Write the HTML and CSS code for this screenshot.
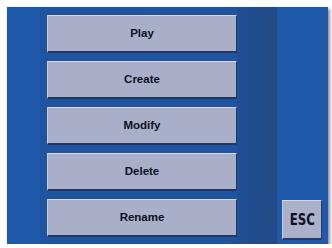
FILE: index.html
```html
<!DOCTYPE html>
<html>
<head>
<meta charset="utf-8">
<link rel="stylesheet" href="styles.css">
</head>
<body>
<div class="frame">
  <div class="left"></div>
  <div class="panel">
    <div class="menu">
      <div class="btn">Play</div>
      <div class="btn">Create</div>
      <div class="btn">Modify</div>
      <div class="btn">Delete</div>
      <div class="btn">Rename</div>
    </div>
    <div class="strip"></div>
  </div>
  <div class="side">
    <div class="esc"><span class="esc-label">ESC</span></div>
  </div>
</div>
</body>
</html>
```
FILE: styles.css
```css
html, body {
  margin: 0;
  padding: 0;
  background: #ffffff;
}
.frame {
  margin: 7px 0 0 7px;
  width: 321px;
  height: 237px;
  background: #1f5aaa;
  display: flex;
  box-shadow: 2px 2px 3px rgba(90, 90, 110, 0.7);
}
.left {
  width: 33px;
  flex: none;
}
.panel {
  width: 237px;
  flex: none;
  display: flex;
  background: #1e55a2;
}
.menu {
  display: flex;
  flex-direction: column;
  gap: 8px;
  padding: 8px 0 0 7px;
  width: 190px;
}
.btn {
  height: 38px;
  box-sizing: border-box;
  background: #a9afc9;
  border-top: 1px solid #d4d8ea;
  border-left: 1px solid #c8cce0;
  border-bottom: 2px solid #2b3452;
  border-right: 1px solid #2b3452;
  display: flex;
  align-items: center;
  justify-content: center;
  padding-bottom: 1px;
  font-family: "Liberation Sans", Arial, sans-serif;
  font-weight: bold;
  font-size: 11.5px;
  color: #0c1222;
}
.strip {
  flex: 1;
  background: linear-gradient(to right, #1f4f96, #244a86);
}
.side {
  flex: 1;
  display: flex;
  align-items: flex-end;
  justify-content: flex-end;
  padding: 0 6px 4px 0;
}
.esc {
  width: 40px;
  height: 40px;
  box-sizing: border-box;
  background: #abb1cb;
  border-top: 1px solid #d4d8ea;
  border-left: 1px solid #c8cce0;
  border-bottom: 2px solid #2b3a66;
  border-right: 1px solid #2b3a66;
  display: flex;
  align-items: center;
  justify-content: center;
  font-family: "DejaVu Sans Condensed", "DejaVu Sans", sans-serif;
  font-stretch: condensed;
  font-weight: bold;
  font-size: 16px;
  color: #0c1222;
}
.esc-label {
  display: inline-block;
  transform: scaleX(0.82);
}
```
